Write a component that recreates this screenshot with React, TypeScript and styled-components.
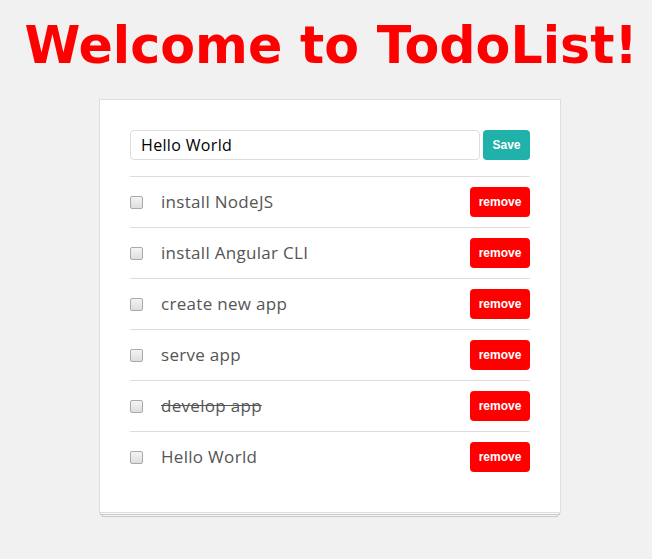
import React, { useState } from "react";
import styled, { createGlobalStyle } from "styled-components";

const GlobalStyle = createGlobalStyle`
  body {
    margin: 0;
    background: #f1f1f1;
    font-family: "Open Sans", "DejaVu Sans", sans-serif;
  }
`;

const Page = styled.div`
  display: flex;
  flex-direction: column;
  align-items: center;
  padding: 14px 0 0 10px;
`;

const Title = styled.h1`
  margin: 0 0 21px;
  font-family: "DejaVu Sans", Verdana, sans-serif;
  font-weight: bold;
  font-size: 50.7px;
  line-height: 64px;
  color: #ff0000;
  white-space: nowrap;
`;

const Stack = styled.div`
  display: flex;
  flex-direction: column;
  margin-right: 2px;
`;

const Card = styled.div`
  width: 400px;
  padding: 30px;
  background: #fff;
  border: 1px solid #dedede;
`;

/* sheets of paper peeking out under the card */
const Sheet = styled.div<{ $inset: number; $tone: string }>`
  height: 1px;
  margin: 0 ${(p) => p.$inset}px;
  background: ${(p) => p.$tone};
  border: 1px solid #cbcbcb;
  border-top: none;
`;

const Form = styled.div`
  display: flex;
  gap: 3px;
  padding-bottom: 16px;
  border-bottom: 1px solid #ddd;
`;

const Input = styled.input`
  flex: 1;
  height: 30px;
  box-sizing: border-box;
  border: 1px solid #ddd;
  border-radius: 4px;
  padding: 0 10px;
  font-family: "Open Sans", "DejaVu Sans", sans-serif;
  font-size: 16px;
  letter-spacing: 0.35px;
  color: #000;
  outline: none;
`;

const Button = styled.button<{ $tone: string; $w: number }>`
  width: ${(p) => p.$w}px;
  height: 30px;
  border: none;
  border-radius: 4px;
  background: ${(p) => p.$tone};
  color: #fff;
  font-family: "Liberation Sans", Arial, sans-serif;
  font-weight: bold;
  font-size: 12px;
  cursor: pointer;
  padding: 0;
`;

const List = styled.ul`
  list-style: none;
  margin: 0;
  padding: 0;
`;

const Row = styled.li`
  display: flex;
  align-items: center;
  height: 50px;
  border-bottom: 1px solid #ddd;
  &:last-child {
    border-bottom: none;
  }
`;

const Check = styled.input`
  appearance: none;
  box-sizing: border-box;
  width: 13px;
  height: 13px;
  margin: 0 18px 0 0;
  border: 1px solid #a9a9a9;
  border-radius: 2px;
  background: linear-gradient(#f4f4f4, #dedede);
  &:checked {
    background: linear-gradient(#e4e4e4, #c8c8c8);
  }
`;

const Label = styled.span<{ $done: boolean }>`
  flex: 1;
  font-size: 17px;
  letter-spacing: 0.3px;
  color: #555;
  margin-top: -2px;
  text-decoration: ${(p) => (p.$done ? "line-through" : "none")};
`;

const initial = [
  { text: "install NodeJS", done: false },
  { text: "install Angular CLI", done: false },
  { text: "create new app", done: false },
  { text: "serve app", done: false },
  { text: "develop app", done: true },
  { text: "Hello World", done: false },
];

export default function App() {
  const [value, setValue] = useState("Hello World");
  const [items] = useState(initial);
  return (
    <Page>
      <GlobalStyle />
      <Title>Welcome to TodoList!</Title>
      <Stack>
        <Card>
          <Form>
            <Input value={value} onChange={(e) => setValue(e.target.value)} />
            <Button $tone="#20b2aa" $w={47}>
              Save
            </Button>
          </Form>
          <List>
            {items.map((it) => (
              <Row key={it.text}>
                <Check type="checkbox" />
                <Label $done={it.done}>{it.text}</Label>
                <Button $tone="#ff0000" $w={60}>
                  remove
                </Button>
              </Row>
            ))}
          </List>
        </Card>
        <Sheet $inset={1} $tone="#fafafa" />
        <Sheet $inset={3} $tone="#f5f5f5" />
      </Stack>
    </Page>
  );
}
